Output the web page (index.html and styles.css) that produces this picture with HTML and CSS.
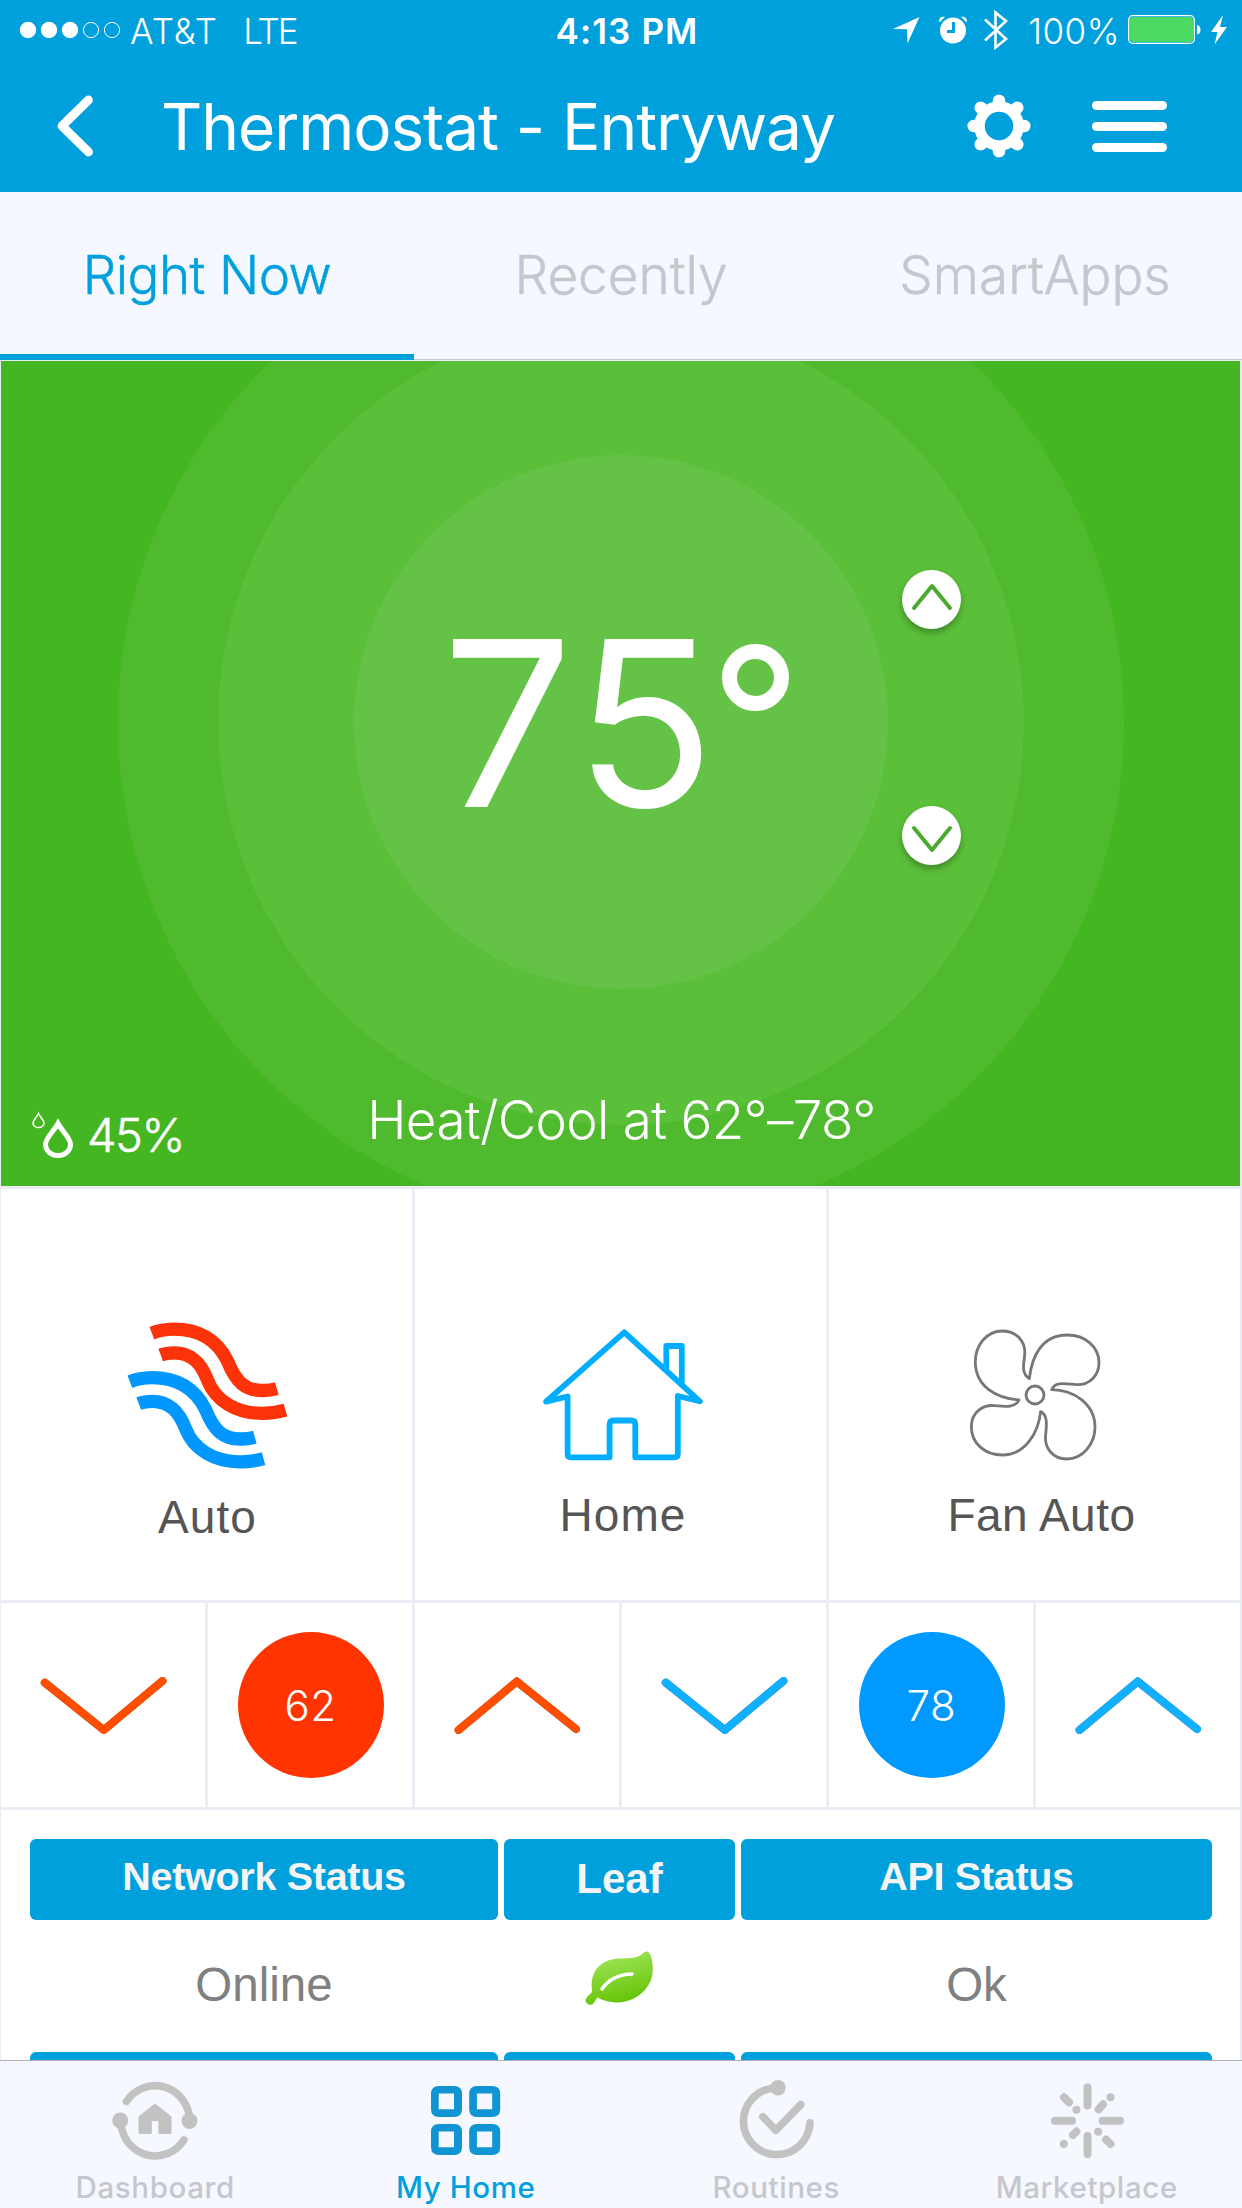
FILE: index.html
```html
<!DOCTYPE html>
<html lang="en">
<head>
<meta charset="utf-8">
<title>Thermostat - Entryway</title>
<link rel="stylesheet" href="styles.css">
</head>
<body>
<div class="app">
  <header class="header">
    <div class="status">
      <div class="status-left">
        <svg class="signal" width="102" height="18" viewBox="19 21 102 18"><g fill="#fff"><circle cx="28" cy="30" r="8.2"/><circle cx="49" cy="30" r="8.2"/><circle cx="70" cy="30" r="8.2"/></g><g fill="none" stroke="#fff" stroke-width="1"><circle cx="91" cy="30" r="7.6"/><circle cx="112" cy="30" r="7.6"/></g></svg>
        <span class="carrier">AT&amp;T</span>
        <span class="network">LTE</span>
      </div>
      <span class="clock">4:13 PM</span>
      <div class="status-right">
        <svg class="location" width="27" height="27" viewBox="0 0 27 27"><path d="M26.5 0 14.5 26.5 14 12.3 0 12Z" fill="#fff"/></svg>
        <svg class="alarm" width="28" height="28" viewBox="0 0 28 28"><circle cx="14" cy="14.5" r="13" fill="#fff"/><path d="M0 5.5Q0 0 6 .8L1 6ZM28 5.5Q28 0 22 .8L27 6Z" fill="#fff"/><path d="M14.5 6V15.5H8" fill="none" stroke="#00a0dd" stroke-width="3"/></svg>
        <svg class="bluetooth" width="24" height="42" viewBox="0 0 24 42"><path d="M1 10.5 22 30 11.5 38.5V3.500L22 12 1 31.500" fill="none" stroke="#fff" stroke-width="2.600"/></svg>
        <span class="percent">100%</span>
        <svg class="battery" width="73" height="30" viewBox="0 0 73 30"><rect x=".7" y=".7" width="65.600" height="27.600" rx="4" fill="none" stroke="#fff" stroke-width="1.300"/><rect x="2" y="2" width="63" height="25" rx="3" fill="#4cd964"/><path d="M69 10Q72.500 10.500 72.500 14.800T69 19.600Z" fill="#fff"/></svg>
        <svg class="bolt" width="17" height="30" viewBox="0 0 17 30"><path d="M12 0 0 17H6.500L3.500 29.500 16 12H9Z" fill="#fff"/></svg>
      </div>
    </div>
    <div class="navbar">
      <svg class="back" width="40" height="64" viewBox="55 94 40 64"><path d="M88.500 100 62 126 88.500 152" fill="none" stroke="#fff" stroke-width="8.800" stroke-linecap="round" stroke-linejoin="round"/></svg>
      <h1 class="title">Thermostat - Entryway</h1>
      <svg class="gear" width="64" height="64" viewBox="-32 -32 64 64"><circle r="19.500" fill="none" stroke="#fff" stroke-width="10.500"/><g stroke="#fff" stroke-width="12.500" stroke-linecap="round"><path d="M0-25.300V-22M0 25.300V22M-25.300 0H-22M25.300 0H22M-18.300-18.300-16-16M18.300 18.300 16 16M-18.300 18.300-16 16M18.300-18.300 16-16"/></g></svg>
      <div class="menu"><i></i><i></i><i></i></div>
    </div>
  </header>

  <nav class="tabs">
    <a class="tab tab-active"><span>Right Now</span></a>
    <a class="tab"><span>Recently</span></a>
    <a class="tab"><span>SmartApps</span></a>
  </nav>

  <main class="tiles">
    <section class="thermostat">
      <div class="ring ring-outer"></div>
      <div class="ring ring-middle"></div>
      <div class="ring ring-inner"></div>
      <div class="temperature"><span class="digits">75</span><span class="degree"></span></div>
      <button class="step step-up"><svg width="44" height="30" viewBox="0 0 44 30"><path d="M4 26 22 4 40 26" /></svg></button>
      <button class="step step-down"><svg width="44" height="30" viewBox="0 0 44 30"><path d="M4 4 22 26 40 4"/></svg></button>
      <div class="setpoint">Heat/Cool at 62°–78°</div>
      <div class="humidity">
        <svg width="43" height="46" viewBox="31 1112 43 46" fill="none" stroke="#fff"><path d="M58 1124.500C54 1132 45.500 1139 45.500 1145.500A12.500 11 0 0 0 70.500 1145.500C70.500 1139 62 1132 58 1124.500Z" stroke-width="5"/><path d="M38.500 1114.500C37 1118 33 1121 33 1124A5.500 4.600 0 0 0 44 1124C44 1121 40 1118 38.500 1114.500Z" stroke-width="1.500"/></svg>
        <span class="humidity-value">45%</span>
      </div>
    </section>

    <section class="tile mode">
      <svg width="160" height="150" viewBox="126.500 1320 160 150" fill="none" stroke-width="13.300">
        <g stroke="#fc3208"><path d="M151.400 1333.200Q161 1329.500 173 1329.200C200 1329 217 1341 227 1361C235 1381 244 1391 263 1390.500Q270 1390.500 276.300 1388.700"/><path d="M160.200 1355Q166 1352.800 174 1352.800C192 1353 201 1364 207 1380C215 1401 236 1413.500 262 1413.300Q274 1413.300 285 1410.200"/></g>
        <g stroke="#0297fd" transform="translate(-22 48.500)"><path d="M151.400 1333.200Q161 1329.500 173 1329.200C200 1329 217 1341 227 1361C235 1381 244 1391 263 1390.500Q270 1390.500 276.300 1388.700"/><path d="M160.200 1355Q166 1352.800 174 1352.800C192 1353 201 1364 207 1380C215 1401 236 1413.500 262 1413.300Q274 1413.300 285 1410.200"/></g>
      </svg>
      <span class="tile-label label-auto">Auto</span>
    </section>
    <section class="tile mode">
      <svg width="160" height="150" viewBox="541 1320 160 150" fill="none" stroke="#00adff" stroke-width="5.800" stroke-linecap="round" stroke-linejoin="round"><path d="M624.300 1332.300 699.800 1401.300 677.800 1396V1454Q677.800 1457.300 674.500 1457.300H635.300V1424.500Q635.300 1420.500 631.300 1420.500H613.600Q609.600 1420.500 609.600 1424.500V1457.300H571Q567.600 1457.300 567.600 1454V1396.500L546 1401.600ZM666.300 1370V1346H681.800V1383"/></svg>
      <span class="tile-label label-home">Home</span>
    </section>
    <section class="tile mode">
      <svg width="160" height="150" viewBox="955 1320 160 150"><g transform="translate(900 1290) scale(.33333)" fill="none" stroke="#777" stroke-width="8.500" stroke-linejoin="round"><path d="M357 330C290 325 226 290 226 215C226 165 260 123 307 123C350 123 378 155 374 195C372 220 362 250 388 266C395 200 425 135 502 135C555 135 597 170 597 218C597 255 570 285 530 284C500 282 465 272 455 299C520 300 585 340 585 412C585 460 550 507 500 507C460 507 432 475 437 435C439 410 445 375 422 365C415 430 375 495 307 495C255 495 214 460 214 410C214 365 250 343 285 347C310 349 345 355 357 330Z"/><circle cx="405" cy="315" r="27"/></g></svg>
      <span class="tile-label label-fan">Fan Auto</span>
    </section>

    <section class="tile heat"><svg width="136" height="70" viewBox="35 1670 136 70"><path d="M44.800 1682.700 103.800 1730 162.400 1681"/></svg></section>
    <section class="tile"><div class="dial dial-heat"><span>62</span></div></section>
    <section class="tile heat"><svg width="136" height="70" viewBox="449 1670 136 70"><path d="M458.600 1730 516.800 1681.500 576 1729"/></svg></section>
    <section class="tile cool"><svg width="136" height="70" viewBox="35 1670 136 70"><path d="M44.800 1682.700 103.800 1730 162.400 1681"/></svg></section>
    <section class="tile"><div class="dial dial-cool"><span>78</span></div></section>
    <section class="tile cool"><svg width="136" height="70" viewBox="449 1670 136 70"><path d="M458.600 1730 516.800 1681.500 576 1729"/></svg></section>

    <section class="info">
      <div class="info-head"><span>Network Status</span></div>
      <div class="info-head info-head-leaf"><span>Leaf</span></div>
      <div class="info-head"><span>API Status</span></div>
      <div class="info-cell"><span>Online</span></div>
      <div class="info-cell"><svg class="leaf" width="70" height="56" viewBox="585 1950 70 56"><defs><linearGradient id="leaf" x1=".3" y1="0" x2=".6" y2="1"><stop offset="0" stop-color="#a2e65c"/><stop offset="1" stop-color="#62c202"/></linearGradient></defs><path fill="url(#leaf)" d="M647 1951.500C652 1952 655 1970 651 1980C645 1995 630 2003 615 2002.500C605 2001.500 600 1999 597.500 1997.500C595 2000 594 2005 590 2005C586 2004 584 2000 587 1997.500C589 1994 593 1993 592 1990C590 1975 597 1962 614 1959C626 1957.500 635 1960 642 1954Q645 1951 647 1951.500Z"/><path d="M602 1989Q612 1974.500 632 1974" fill="none" stroke="#fff" stroke-width="3.600" stroke-linecap="round"/></svg></div>
      <div class="info-cell"><span>Ok</span></div>
      <div class="info-head"></div><div class="info-head"></div><div class="info-head"></div>
    </section>
  </main>

  <footer class="tabbar">
    <a class="tabbar-item">
      <svg width="90" height="80" viewBox="109.500 2080 90 80" fill="none" stroke="#c2c2c2" stroke-width="7.600" stroke-linecap="round"><path d="M126 2101.500A34.500 35.700 0 0 1 188.800 2116M183.400 2140A34.500 35.700 0 0 1 120.500 2125"/><g fill="#c2c2c2" stroke="none"><circle cx="189" cy="2121" r="8"/><circle cx="119.700" cy="2120.500" r="8"/><path d="M154.500 2103.500 171 2116.500V2132.500Q171 2134 169.500 2134H159Q157.800 2134 157.800 2132.500V2121H151.300V2132.500Q151.300 2134 149.800 2134H139.500Q138 2134 138 2132.500V2116.500Z"/></g></svg>
      <span>Dashboard</span>
    </a>
    <a class="tabbar-item tabbar-active">
      <svg width="90" height="80" viewBox="421 2080 90 80" fill="#1094d4" fill-rule="evenodd"><path id="square" d="M439 2086H454Q462 2086 462 2094V2109Q462 2117 454 2117H439Q431 2117 431 2109V2094Q431 2086 439 2086ZM438.700 2093.500V2109.300H454V2093.500Z"/><use href="#square" x="38.200"/><use href="#square" y="38"/><use href="#square" x="38.200" y="38"/></svg>
      <span>My Home</span>
    </a>
    <a class="tabbar-item">
      <svg width="90" height="80" viewBox="731 2080 90 80" fill="none" stroke="#c2c2c2" stroke-width="7.600" stroke-linecap="round" stroke-linejoin="round"><path d="M775 2088A33.300 33.300 0 1 0 810 2122.700M762.800 2116.700 775.900 2130.300 800.800 2104.500"/><circle cx="778" cy="2087.700" r="7.700" fill="#c2c2c2" stroke="none"/></svg>
      <span>Routines</span>
    </a>
    <a class="tabbar-item">
      <svg width="90" height="80" viewBox="1042 2080 90 80" fill="none" stroke="#c2c2c2" stroke-width="8" stroke-linecap="round"><path d="M1087.500 2087.500V2105.500M1087.500 2136V2154M1055 2120.700H1072M1102.600 2120.700H1120M1064 2097.300 1069 2102.300M1076.400 2109.700V2109.710M1103 2104.300 1098.600 2109.300M1110.500 2097.300V2097.310M1076.400 2131.500 1073 2135M1063.800 2144V2144.010M1098.200 2131.700V2131.710M1106 2139.500 1110.500 2144"/></svg>
      <span>Marketplace</span>
    </a>
  </footer>
</div>
</body>
</html>
```
FILE: styles.css
```css
* { box-sizing: border-box; }
body { margin: 0; background: #fff; font-family: Inter, "Liberation Sans", sans-serif; }
svg { display: block; flex: none; overflow: visible; }
a { color: inherit; text-decoration: none; }

.app { display: flex; flex-direction: column; width: 1242px; height: 2208px; overflow: hidden; }

.header { height: 192px; flex: none; background: #00a0dd; color: #fff; }
.status { display: grid; grid-template-columns: 1fr auto 1fr; height: 60px; line-height: 62px; font-size: 35px; white-space: nowrap; }
.status-left, .status-right { display: flex; align-items: center; height: 60px; }
.status-left { padding-left: 19px; }
.status-right { justify-content: flex-end; padding-right: 14px; }
.carrier, .network, .percent { padding-top: 2px; font-weight: 300; }
.carrier { margin-left: 9px; letter-spacing: 1.1px; }
.network { margin-left: 25px; letter-spacing: -2px; }
.clock { padding-left: 12px; font-weight: 600; letter-spacing: 1.1px; }
.alarm { margin-left: 19px; }
.bluetooth { margin-left: 17px; }
.percent { margin-left: 20px; letter-spacing: .5px; }
.battery { margin-left: 8px; }
.bolt { margin-left: 10px; }

.navbar { display: flex; align-items: center; height: 132px; padding: 0 75px 0 55px; }
.title { flex: 1; margin: 2px 0 0 66px; font-size: 64px; font-weight: 400; line-height: 132px; letter-spacing: -1.1px; word-spacing: 1px; white-space: nowrap; }
.menu { display: flex; flex-direction: column; gap: 12px; width: 75px; margin-left: 61px; }
.menu i { height: 9px; border-radius: 4.5px; background: #fff; }

.tabs { display: grid; grid-template-columns: repeat(3, 414px); flex: none; height: 168px; background: #f5f8ff; border-bottom: 1px solid #c6c7cc; }
.tab { display: flex; align-items: center; justify-content: center; height: 166px; color: #c6c7cc; font-size: 53px; font-weight: 300; white-space: nowrap; -webkit-text-stroke: .5px currentColor; }
.tab-active { height: 168px; padding-bottom: 2px; color: #00a0dd; letter-spacing: -.6px; box-shadow: inset 0 -6px #00a0dd; }

.tiles { display: grid; grid-template-columns: repeat(6, 204px); grid-template-rows: 825px 411px 204px 400px; gap: 3px; padding: 1px 2px 0 1px; height: 1700px; flex: none; background: #eaedf4; overflow: hidden; }
.thermostat { position: relative; grid-column: 1 / -1; overflow: hidden; background: #44b622; color: #fff; }
.ring { position: absolute; left: 620px; top: 361px; border-radius: 50%; transform: translate(-50%, -50%); }
.ring-outer { width: 1006px; height: 1006px; background: #4fba2d; }
.ring-middle { width: 806px; height: 806px; background: #5abf39; }
.ring-inner { width: 534px; height: 534px; background: #64c346; }
.temperature { position: absolute; left: 441px; top: 222px; display: flex; }
.digits { width: 280px; font-size: 231px; line-height: 280px; font-weight: 400; letter-spacing: 4px; }
.degree { width: 67px; height: 67px; margin-top: 61px; border: 15px solid #fff; border-radius: 50%; }
.step { position: absolute; left: 901px; display: flex; align-items: center; justify-content: center; width: 59px; height: 59px; padding: 0; border: 0; border-radius: 50%; background: #fff; box-shadow: 0 4px 6px rgba(0, 0, 0, .28); }
.step-up { top: 209px; padding-bottom: 6px; }
.step-down { top: 445px; padding-top: 6px; }
.step path { fill: none; stroke: #4caa30; stroke-width: 4; stroke-linecap: round; stroke-linejoin: round; }
.setpoint { position: absolute; left: 2px; right: 0; bottom: 34px; text-align: center; font-size: 53px; line-height: 64px; font-weight: 300; letter-spacing: -.7px; }
.humidity { position: absolute; left: 30px; bottom: 28px; display: flex; align-items: center; }
.humidity-value { margin-left: 13px; padding-top: 3px; font-size: 47px; line-height: 46px; font-weight: 300; letter-spacing: -1.5px; -webkit-text-stroke: .5px currentColor; }

.tile { display: flex; flex-direction: column; align-items: center; justify-content: center; background: #fff; }
.mode { grid-column: span 2; justify-content: flex-start; padding-top: 131px; }
.tile-label { margin-top: 17px; font: 46px/56px "Liberation Sans", sans-serif; letter-spacing: 1.1px; color: #555; }
.label-auto { padding: 2px 0 0 2px; }
.label-home { padding-left: 5px; }
.label-fan { padding-left: 14px; letter-spacing: .5px; }
.heat path, .cool path { fill: none; stroke-width: 8; stroke-linecap: round; stroke-linejoin: round; }
.heat svg, .cool svg { filter: drop-shadow(0 .8px 0 rgba(0, 0, 0, .6)); }
.heat path { stroke: #ff4e00; }
.cool path { stroke: #10b0ff; }
.dial { display: flex; align-items: center; justify-content: center; width: 146px; height: 146px; margin-left: 1px; border-radius: 50%; color: #fff; font-size: 42px; font-weight: 300; letter-spacing: .6px; }
.dial-heat { background: #ff3400; }
.dial-cool { background: #0099ff; }

.info { grid-column: 1 / -1; display: grid; grid-template-columns: 468px 231px 471px; grid-template-rows: 81px 132px 81px; column-gap: 6px; align-content: start; padding: 29px 0 0 29px; background: #fff; font-family: "Liberation Sans", sans-serif; }
.info-head { display: flex; align-items: center; justify-content: center; padding-bottom: 6px; border-radius: 6px; background: #00a0dd; color: #f5f5f5; font-size: 39.5px; font-weight: 700; letter-spacing: -.3px; }
.info-head-leaf { padding-bottom: 1px; font-size: 42px; letter-spacing: 0; }
.info-cell { display: flex; align-items: center; justify-content: center; padding-bottom: 3px; color: #808080; font-size: 47.5px; }
.leaf { margin-bottom: 13px; }

.tabbar { display: grid; grid-template-columns: repeat(4, 310.5px); flex: none; height: 148px; background: #f5f8ff; border-top: 1px solid #afafb2; }
.tabbar-item { display: flex; flex-direction: column; align-items: center; padding-top: 19px; color: #c6c7cc; font-size: 29.5px; font-weight: 500; letter-spacing: .6px; line-height: 36px; }
.tabbar-item span { margin-top: 9px; }
.tabbar-active { color: #00a0dd; }
```
